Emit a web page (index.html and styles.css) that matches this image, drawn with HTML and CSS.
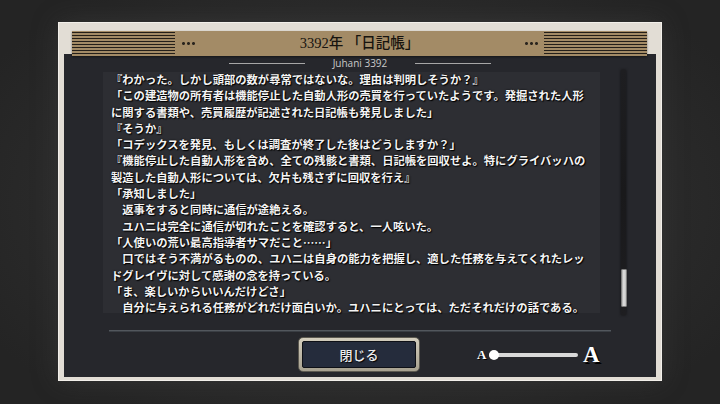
FILE: index.html
```html
<!DOCTYPE html>
<html lang="ja">
<head>
<meta charset="utf-8">
<title>日記帳</title>
<link rel="stylesheet" href="styles.css">
</head>
<body>
<div class="frame">
  <header class="head">
    <div class="stripes"></div>
    <div class="dots"></div>
    <div class="title">3392年 「日記帳」</div>
    <div class="dots"></div>
    <div class="stripes"></div>
  </header>
  <main class="panel">
    <div class="sub"><span class="rule"></span><span class="sub-text">Juhani 3392</span><span class="rule"></span></div>
    <div class="content">
      <div class="textbox">
        <div class="lines">
          <p class="ln">『わかった。しかし頭部の数が尋常ではないな。理由は判明しそうか？』</p>
          <p class="ln">「この建造物の所有者は機能停止した自動人形の売買を行っていたようです。発掘された人形</p>
          <p class="ln">に関する書類や、売買履歴が記述された日記帳も発見しました」</p>
          <p class="ln">『そうか』</p>
          <p class="ln">「コデックスを発見、もしくは調査が終了した後はどうしますか？」</p>
          <p class="ln">『機能停止した自動人形を含め、全ての残骸と書類、日記帳を回収せよ。特にグライバッハの</p>
          <p class="ln">製造した自動人形については、欠片も残さずに回収を行え』</p>
          <p class="ln">「承知しました」</p>
          <p class="ln">　返事をすると同時に通信が途絶える。</p>
          <p class="ln">　ユハニは完全に通信が切れたことを確認すると、一人呟いた。</p>
          <p class="ln">「人使いの荒い最高指導者サマだこと……」</p>
          <p class="ln">　口ではそう不満がるものの、ユハニは自身の能力を把握し、適した任務を与えてくれたレッ</p>
          <p class="ln">ドグレイヴに対して感謝の念を持っている。</p>
          <p class="ln">「ま、楽しいからいいんだけどさ」</p>
          <p class="ln">　自分に与えられる任務がどれだけ面白いか。ユハニにとっては、ただそれだけの話である。</p>
        </div>
      </div>
      <div class="scroll"><div class="thumb"></div></div>
    </div>
    <div class="sep"></div>
    <div class="controls">
      <button class="close"><span class="close-in">閉じる</span></button>
      <div class="slider">
        <span class="a-small">A</span>
        <span class="track"><span class="knob"></span></span>
        <span class="a-big">A</span>
      </div>
    </div>
  </main>
</div>
</body>
</html>
```
FILE: styles.css
```css
html, body {
  margin: 0;
  padding: 0;
}
body {
  width: 720px;
  height: 404px;
  overflow: hidden;
  box-sizing: border-box;
  padding-top: 22px;
  background:
    radial-gradient(ellipse 60% 65% at 50% 50%, #333333 0%, #2b2b2b 65%, #242424 100%);
}
.frame {
  margin-left: 58px;
  width: 604px;
  height: 359px;
  box-sizing: border-box;
  background: #e2ddd5;
  border: 1px solid #f2efea;
  padding: 8px 5px 3px;
  display: flex;
  flex-direction: column;
  box-shadow: 0 0 24px rgba(75, 75, 75, 0.35);
}
.head {
  display: flex;
  align-items: flex-start;
  height: 25px;
  margin: 0 9px -2px 8px;
  background: #a38b66;
  position: relative;
  z-index: 1;
  box-shadow: 0 1px 2px rgba(0, 0, 0, 0.45);
}
.stripes {
  width: 103px;
  height: 23px;
  margin-top: 1px;
  background: repeating-linear-gradient(to bottom, #241f19 0 1px, transparent 1px 3px);
}
.dots {
  width: 15px;
  height: 3px;
  margin: 11px 5px 0 6px;
  background: radial-gradient(circle at center, #29241d 1.2px, transparent 1.7px) 0 0 / 5px 3px repeat-x;
}
.title {
  flex: 1;
  text-align: center;
  font: 500 14.5px/25px "Liberation Serif", "Noto Sans CJK JP", serif;
  color: #17140f;
}
.panel {
  flex: 1;
  background: #26272c;
  display: flex;
  flex-direction: column;
  padding-top: 2px;
}
.sub {
  height: 14px;
  display: flex;
  align-items: center;
  justify-content: center;
  gap: 28px;
}
.rule {
  width: 76px;
  height: 1px;
  background: #a7a7a7;
}
.sub-text {
  font: 10px/14px "Open Sans", sans-serif;
  color: #c9c9c9;
}
.content {
  display: flex;
  margin-top: 2px;
  height: 241px;
}
.textbox {
  margin-left: 39px;
  width: 497px;
  background: #2d2e33;
  padding-left: 8px;
  box-sizing: border-box;
}
.lines {
  margin-top: -1px;
}
.ln {
  margin: 0;
  white-space: pre;
  font: 700 11.3px/16.3px "Noto Sans CJK JP", sans-serif;
  color: #f4f4f4;
  text-shadow: 1px 1px 1px #000, 0 0 2px #000;
}
.scroll {
  width: 5px;
  height: 245px;
  margin: -2px 0 -2px 21px;
  background: linear-gradient(to bottom, #1e1e21, #19191b 50%, #1e1e21);
  box-shadow: 0 0 3px rgba(0, 0, 0, 0.6);
  display: flex;
  flex-direction: column;
  align-items: center;
}
.thumb {
  width: 6px;
  height: 38px;
  margin-top: 199px;
  box-sizing: border-box;
  border: 1px solid #7d7d7d;
  border-radius: 1px;
  background: linear-gradient(to right, #a9a9a9, #e2e2e2 45%, #bdbdbd);
}
.sep {
  margin: 17px 0 0 45px;
  width: 502px;
  height: 1px;
  background: #52575d;
  box-shadow: 0 1px 0 #3a3e44;
}
.controls {
  display: flex;
  align-items: center;
  margin-top: 6px;
  height: 35px;
  padding-left: 234px;
}
.close {
  width: 122px;
  height: 35px;
  box-sizing: border-box;
  padding: 3px;
  margin: 0;
  border: 1px solid #5c5950;
  border-radius: 5px;
  background: linear-gradient(to bottom, #d3cdbd, #a7a190);
  display: flex;
  cursor: pointer;
}
.close-in {
  flex: 1;
  display: flex;
  align-items: center;
  justify-content: center;
  background: #252c3c;
  border: 1px solid #0e1016;
  border-radius: 2px;
  font: 500 13px "Noto Sans CJK JP", sans-serif;
  color: #eeeeee;
  text-shadow: 1px 1px 1px #000;
}
.slider {
  display: flex;
  align-items: center;
  margin-left: 57px;
}
.a-small {
  font: bold 13px/1 "Liberation Serif", serif;
  color: #fff;
  text-shadow: 1px 1px 0 #000;
  width: 12px;
}
.track {
  position: relative;
  width: 89px;
  height: 4px;
  background: #d9d9d9;
  border-radius: 2px;
}
.knob {
  position: absolute;
  left: 0;
  top: 50%;
  width: 10px;
  height: 10px;
  margin-top: -5px;
  border-radius: 50%;
  background: #ffffff;
}
.a-big {
  margin-left: 5px;
  font: bold 23px/1 "Liberation Serif", serif;
  color: #fff;
  text-shadow: 2px 2px 0 #000;
}
```
